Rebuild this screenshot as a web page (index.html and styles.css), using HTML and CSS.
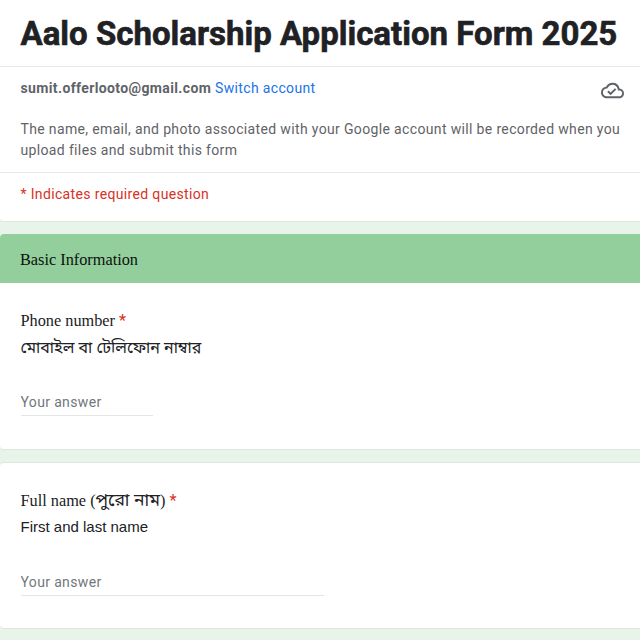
FILE: index.html
```html
<!DOCTYPE html>
<html lang="en">
<head>
  <meta charset="UTF-8">
  <meta name="viewport" content="width=device-width, initial-scale=1.0">
  <title>Aalo Scholarship Application Form 2025</title>
  <link rel="stylesheet" href="styles.css">
</head>
<body>
  <form class="form">
    <!-- Form header -->
    <div class="card header">
      <h1>Aalo Scholarship Application Form 2025</h1>
      <div class="account">
        <div class="account-row">
          <p><span class="email">sumit.offerlooto@gmail.com</span> <a href="#">Switch account</a></p>
          <svg class="cloud" viewBox="0 0 24 24">
            <path d="M19.35 10.04A7.49 7.49 0 0 0 12 4C9.11 4 6.6 5.64 5.35 8.04A5.994 5.994 0 0 0 0 14c0 3.31 2.69 6 6 6h13c2.76 0 5-2.24 5-5 0-2.64-2.05-4.78-4.65-4.96zM19 18H6c-2.21 0-4-1.79-4-4 0-2.05 1.53-3.76 3.56-3.97l1.07-.11.5-.95A5.469 5.469 0 0 1 12 6c2.62 0 4.88 1.86 5.39 4.43l.3 1.5 1.53.11A2.98 2.98 0 0 1 22 15c0 1.65-1.35 3-3 3zm-9-3.82l-2.09-2.09L6.5 13.5 10 17l6.01-6.01-1.41-1.41z"/>
          </svg>
        </div>
        <p class="notice">The name, email, and photo associated with your Google account will be recorded when you upload files and submit this form</p>
      </div>
      <p class="required-note">* Indicates required question</p>
    </div>

    <!-- Phone number -->
    <div class="card phone">
      <h2>Basic Information</h2>
      <div class="question">
        <label for="phone">Phone number <span class="star">*</span></label>
        <p class="hint bengali">মোবাইল বা টেলিফোন নাম্বার</p>
        <input type="text" id="phone" class="short" placeholder="Your answer">
      </div>
    </div>

    <!-- Full name -->
    <div class="card name">
      <div class="question">
        <label for="name">Full name (<span class="bengali">পুরো নাম</span>) <span class="star">*</span></label>
        <p class="hint">First and last name</p>
        <input type="text" id="name" placeholder="Your answer">
      </div>
    </div>
  </form>
</body>
</html>
```
FILE: styles.css
```css
* {
  margin: 0;
  padding: 0;
  box-sizing: border-box;
}

body {
  font-family: Roboto, "Liberation Sans", Arial, sans-serif;
  font-size: 14px;
  letter-spacing: 0.35px;
  color: #5f6368;
  background: #e8f3ea;
  overflow: hidden;
}

.form {
  display: flex;
  flex-direction: column;
  gap: 12px;
  height: 640px;
}

.card {
  flex: none;
  background: #fff;
  border: 1px solid #dde6df;
  border-width: 1px 0;
  border-radius: 4px 0 0 4px;
  overflow: hidden;
}

.header {
  height: 222px;
  border-top: none;
  border-radius: 0 0 0 4px;
}

h1 {
  height: 66px;
  padding-left: 20.5px;
  font-size: 33px;
  font-weight: bold;
  line-height: 67px;
  letter-spacing: 0;
  white-space: nowrap;
  color: #202124;
  -webkit-text-stroke: 0.6px #202124;
}

.account {
  height: 107px;
  padding: 11px 16px 0 20.5px;
  border: 1px solid #e6e8ea;
  border-width: 1px 0;
}

.account-row {
  display: flex;
  justify-content: space-between;
  line-height: 21px;
}

.email {
  font-weight: bold;
  letter-spacing: 0.37px;
}

a {
  color: #1a73e8;
  text-decoration: none;
}

.cloud {
  width: 23px;
  height: 23px;
  margin-top: 1px;
  fill: #5f6368;
}

.notice {
  margin-top: 17px;
  margin-right: -16px;
  line-height: 21px;
}

.required-note {
  padding: 11px 20.5px;
  line-height: 21px;
  color: #d93025;
}

.phone {
  height: 216px;
  border-top: none;
}

h2 {
  height: 49px;
  padding-left: 20px;
  font-family: "Liberation Serif", "Times New Roman", serif;
  font-size: 16.3px;
  font-weight: normal;
  line-height: 51px;
  letter-spacing: 0;
  color: #0c120d;
  background: #93cf9c;
}

.question {
  display: flex;
  flex-direction: column;
  align-items: flex-start;
  padding: 25px 20.5px 0;
}

label {
  height: 25px;
  font-family: "Liberation Serif", "Times New Roman", serif;
  font-size: 16.3px;
  line-height: 25px;
  letter-spacing: 0;
  color: #202124;
}

.star {
  font-family: Roboto, sans-serif;
  color: #d93025;
}

.hint {
  height: 28px;
  font-family: "Liberation Sans", Arial, sans-serif;
  font-size: 15px;
  line-height: 28px;
  letter-spacing: 0;
  color: #202124;
}

.bengali {
  font-family: "Noto Sans Bengali", Vrinda, "Noto Sans", sans-serif;
  font-size: 16px;
}

.hint.bengali {
  line-height: 32px;
}

label .bengali {
  font-size: 17.5px;
  line-height: 1;
}

input {
  width: 303px;
  height: 29px;
  margin-top: 26px;
  padding-top: 2px;
  font-family: inherit;
  font-size: 14px;
  letter-spacing: 0.35px;
  border: none;
  border-bottom: 1px solid #e4e5e7;
  outline: none;
}

input::placeholder {
  color: #72777c;
}

.short {
  width: 132px;
}

.name {
  height: 167px;
}
```
